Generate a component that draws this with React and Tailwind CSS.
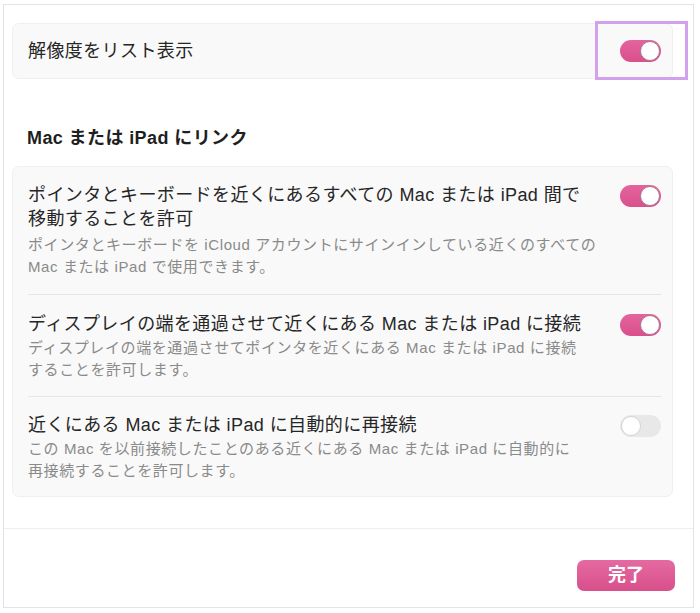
import React from 'react';

const font = { fontFamily: '"Liberation Sans", "Noto Sans CJK JP", sans-serif' };

const Toggle = ({ on }) => (
  <div
    className={`flex h-[22px] w-[41px] shrink-0 items-center rounded-full p-[1px] ${
      on ? 'justify-end bg-gradient-to-b from-[#e4649e] to-[#d94f8c]' : 'justify-start bg-[#e8e8e8]'
    }`}
  >
    <div
      className={`h-[20px] w-[20px] rounded-full bg-white ${
        on ? 'border border-[#a9788f]' : 'border border-[#d4d4d4]'
      }`}
    />
  </div>
);

const rows = [
  {
    title: ['ポインタとキーボードを近くにあるすべての Mac または iPad 間で', '移動することを許可'],
    desc: ['ポインタとキーボードを iCloud アカウントにサインインしている近くのすべての', 'Mac または iPad で使用できます。'],
    on: true,
    pad: 'pt-[16px] pb-[16px]',
    gap: 'mt-[3px]',
  },
  {
    title: ['ディスプレイの端を通過させて近くにある Mac または iPad に接続'],
    desc: ['ディスプレイの端を通過させてポインタを近くにある Mac または iPad に接続', 'することを許可します。'],
    on: true,
    pad: 'pt-[17px] pb-[15px]',
    gap: 'mt-[1px]',
  },
  {
    title: ['近くにある Mac または iPad に自動的に再接続'],
    desc: ['この Mac を以前接続したことのある近くにある Mac または iPad に自動的に', '再接続することを許可します。'],
    on: false,
    pad: 'pt-[16px] pb-[14px]',
    gap: 'mt-[1px]',
  },
];

const Lines = ({ lines }) =>
  lines.map((t, j) => (
    <React.Fragment key={j}>
      {j > 0 && <br />}
      {t}
    </React.Fragment>
  ));

export default function App() {
  return (
    <div className="relative h-[613px] w-[700px] overflow-hidden bg-white pl-[3px] pt-[4px]" style={font}>
      <div className="flex h-[604px] w-[691px] flex-col border border-[#dfe4ea]">
        <div className="pl-[8px] pr-[20px] pt-[18px]">
          {/* ── Resolution row ── */}
          <div className="flex h-[56px] items-center justify-between rounded-[7px] border border-[#efefef] bg-[#f9f9f9] pl-[15px] pr-[11px]">
            <span className="text-[18px] leading-[24px] tracking-[0.4px] text-[#262626]">解像度をリスト表示</span>
            <Toggle on />
          </div>

          <h2 className="mt-[47px] pl-[15px] text-[18px] font-bold leading-[24px] tracking-[0.4px] text-[#1f1f1f]">
            Mac または iPad にリンク
          </h2>

          {/* ── Link settings ── */}
          <div className="mt-[16px] rounded-[7px] border border-[#efefef] bg-[#f9f9f9] pl-[15px] pr-[11px]">
            {rows.map((row, i) => (
              <div key={i} className={`flex items-start justify-between gap-4 ${row.pad} ${i > 0 ? 'border-t border-[#e6e6e6]' : ''}`}>
                <div>
                  <p className="text-[18px] leading-[24px] tracking-[0.4px] text-[#262626]">
                    <Lines lines={row.title} />
                  </p>
                  <p className={`${row.gap} text-[15px] leading-[22px] tracking-[0.6px] text-[#8a8a8a]`}>
                    <Lines lines={row.desc} />
                  </p>
                </div>
                <div className="mt-[2px]">
                  <Toggle on={row.on} />
                </div>
              </div>
            ))}
          </div>
        </div>

        {/* ── Footer ── */}
        <div className="mt-[31px] flex flex-1 justify-end border-t border-[#ebeef2] pr-[18px] pt-[31px]">
          <button className="h-[31px] w-[98px] rounded-[7px] bg-gradient-to-b from-[#e56aa1] to-[#d84f8b] text-[18px] font-bold leading-[31px] text-white">
            完了
          </button>
        </div>
      </div>

      {/* highlight on the first toggle */}
      <div className="absolute left-[595px] top-[21px] h-[59px] w-[93px] border-[3px] border-[#d3a0ee]" />
    </div>
  );
}
